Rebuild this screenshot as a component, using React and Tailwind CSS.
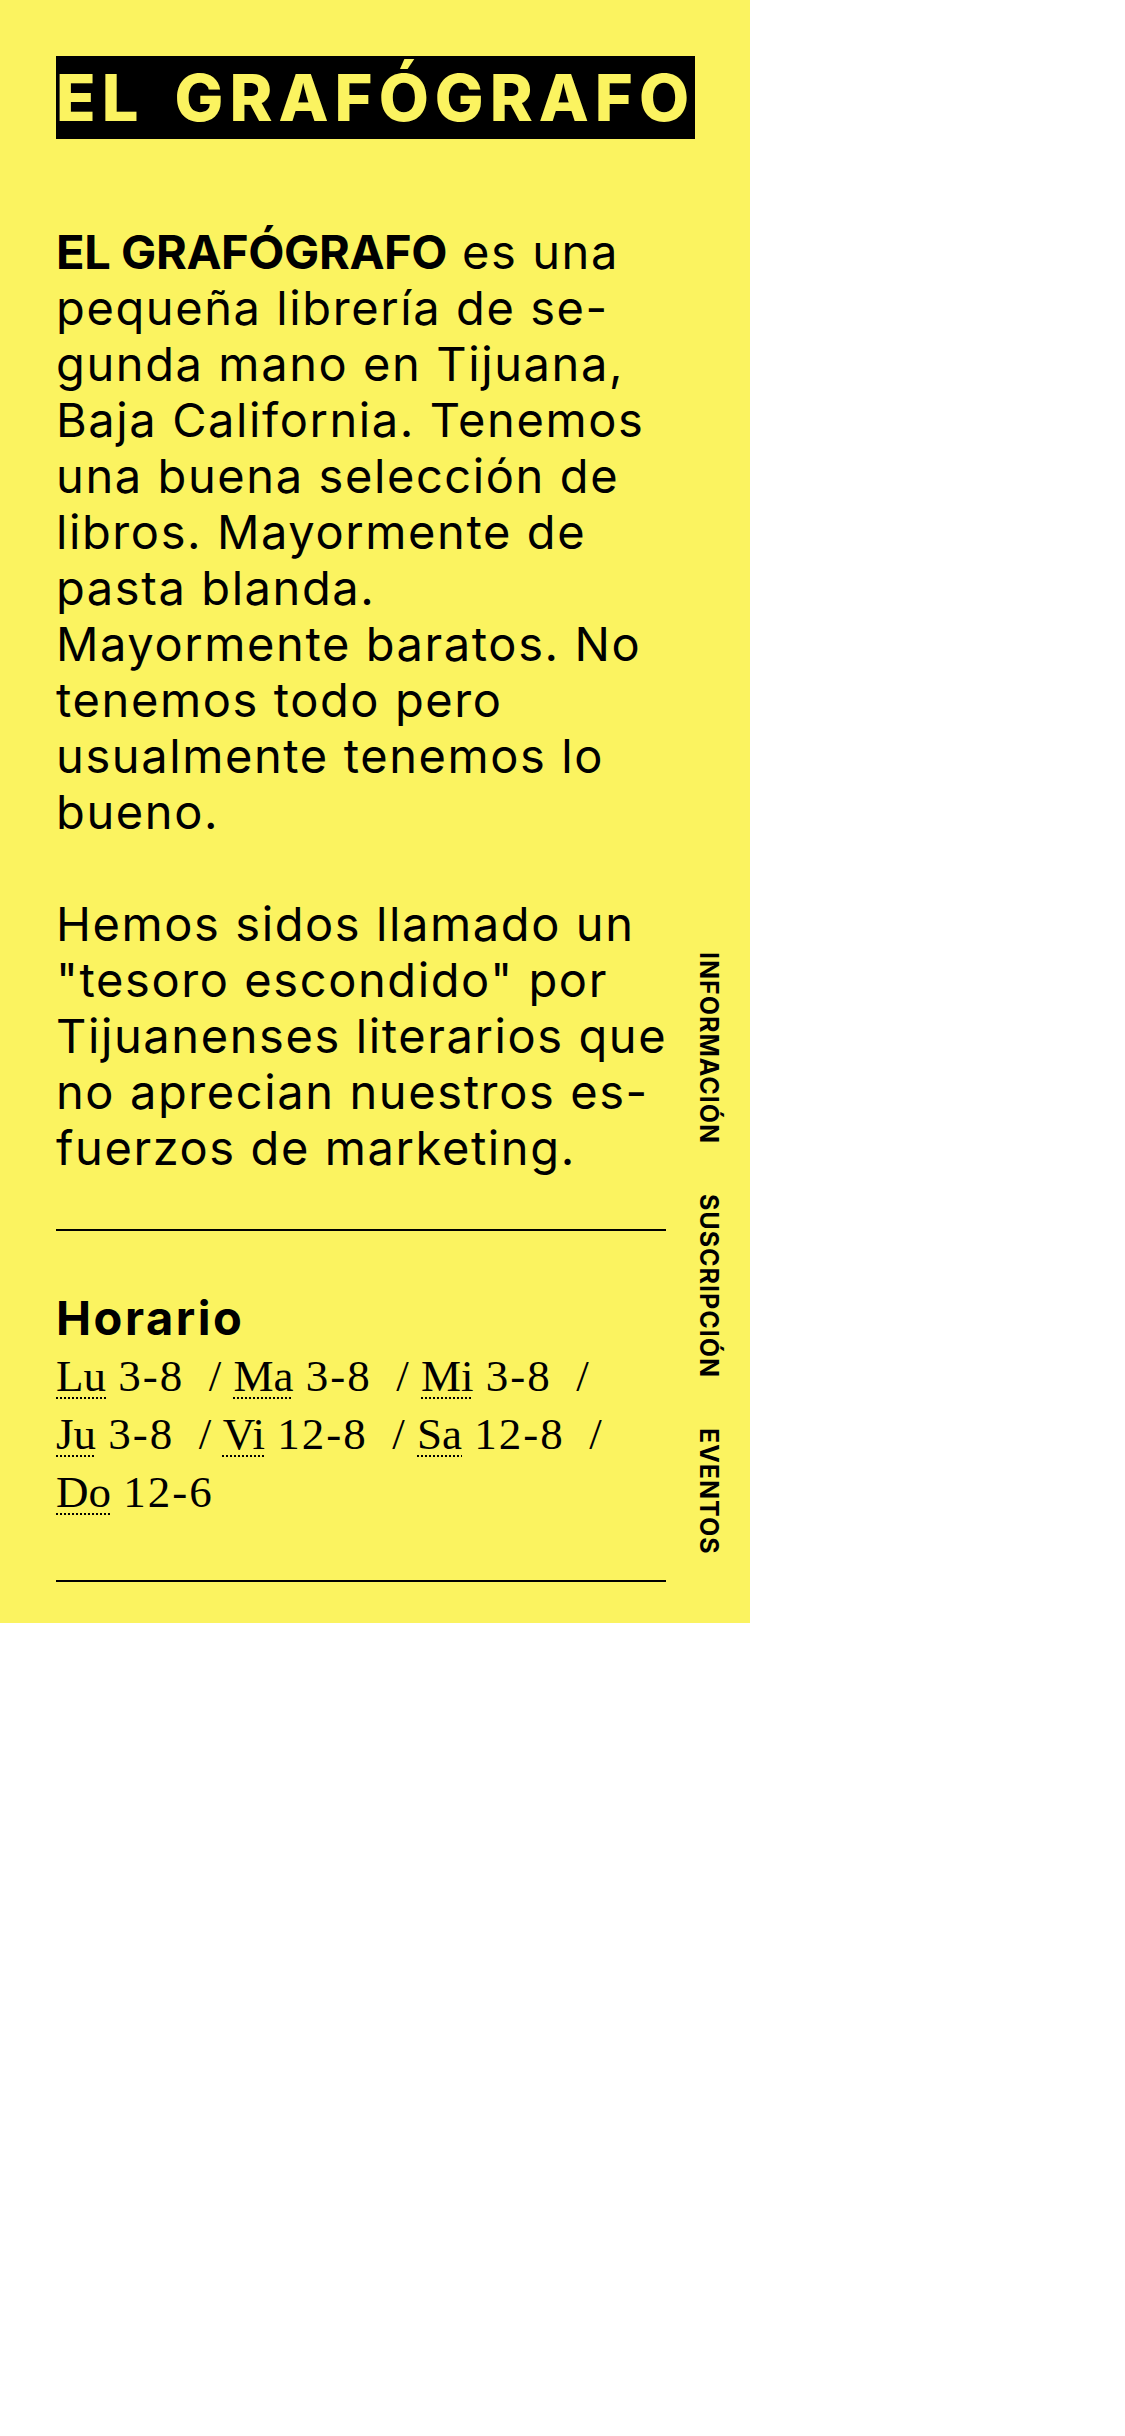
import React from "react";

const body = { fontFamily: "Inter, 'Noto Sans', sans-serif" };
const serif = { fontFamily: "'Liberation Serif', 'Times New Roman', serif" };

function Day({ d, t }) {
  return (
    <abbr
      title={t}
      className="underline decoration-dotted decoration-2 underline-offset-[6px]"
    >
      {d}
    </abbr>
  );
}

function N({ children }) {
  return <span className="tracking-[2px]">{children}</span>;
}

const SEP = "  / ";

export default function App() {
  const lines1 = [
    <>
      <span className="font-bold tracking-[-0.4px]">EL GRAFÓGRAFO</span> es una
    </>,
    "pequeña librería de se-",
    "gunda mano en Tijuana,",
    "Baja California. Tenemos",
    "una buena selección de",
    "libros. Mayormente de",
    "pasta blanda.",
    "Mayormente baratos. No",
    "tenemos todo pero",
    "usualmente tenemos lo",
    "bueno.",
  ];
  const lines2 = [
    "Hemos sidos llamado un",
    "\"tesoro escondido\" por",
    "Tijuanenses literarios que",
    "no aprecian nuestros es-",
    "fuerzos de marketing.",
  ];
  return (
    <div className="min-h-[2436px] w-[1125px] bg-white">
      <div
        className="w-[750px] bg-[#fbf360] pt-[56px] pl-[56px] pb-[41px] text-black"
        style={body}
      >
        <h1 className="w-fit bg-black text-[#fbf360] text-[65px] font-extrabold leading-[83px] tracking-[6px] [word-spacing:10px] whitespace-nowrap">
          EL GRAFÓGRAFO
        </h1>
        <div className="flex">
          <div className="w-[610px] shrink-0">
            <div className="mt-[85px] text-[47px] leading-[56px] tracking-[1.6px]">
              {lines1.map((l, i) => (
                <div key={i} className="whitespace-nowrap">
                  {l}
                </div>
              ))}
              <div className="h-[56px]" />
              {lines2.map((l, i) => (
                <div key={i} className="whitespace-nowrap">
                  {l}
                </div>
              ))}
            </div>
            <div className="mt-[53px] h-[2px] bg-black" />
            <h2 className="mt-[59px] text-[47px] leading-[56px] font-bold tracking-[2.5px]">
              Horario
            </h2>
            <div className="mt-[1px] text-[45px] leading-[58px] [word-spacing:1px]" style={serif}>
              <div className="whitespace-pre">
                <Day d="Lu" t="Lunes" />{" "}<N>3-8</N>{SEP}<Day d="Ma" t="Martes" />{" "}<N>3-8</N>{SEP}
                <Day d="Mi" t="Miércoles" />{" "}<N>3-8</N>{SEP}
              </div>
              <div className="whitespace-pre">
                <Day d="Ju" t="Jueves" />{" "}<N>3-8</N>{SEP}<Day d="Vi" t="Viernes" />{" "}<N>12-8</N>{SEP}
                <Day d="Sa" t="Sábado" />{" "}<N>12-8</N>{SEP}
              </div>
              <div className="whitespace-pre">
                <Day d="Do" t="Domingo" />{" "}<N>12-6</N>
              </div>
            </div>
            <div className="mt-[59px] h-[2px] bg-black" />
          </div>
          <nav className="flex flex-1 flex-col items-center justify-end gap-[50px] pb-[27px]">
            {["INFORMACIÓN", "SUSCRIPCIÓN", "EVENTOS"].map((n) => (
              <a
                key={n}
                className="[writing-mode:vertical-rl] text-[25px] font-bold tracking-[1px] leading-none"
              >
                {n}
              </a>
            ))}
          </nav>
        </div>
      </div>
    </div>
  );
}
